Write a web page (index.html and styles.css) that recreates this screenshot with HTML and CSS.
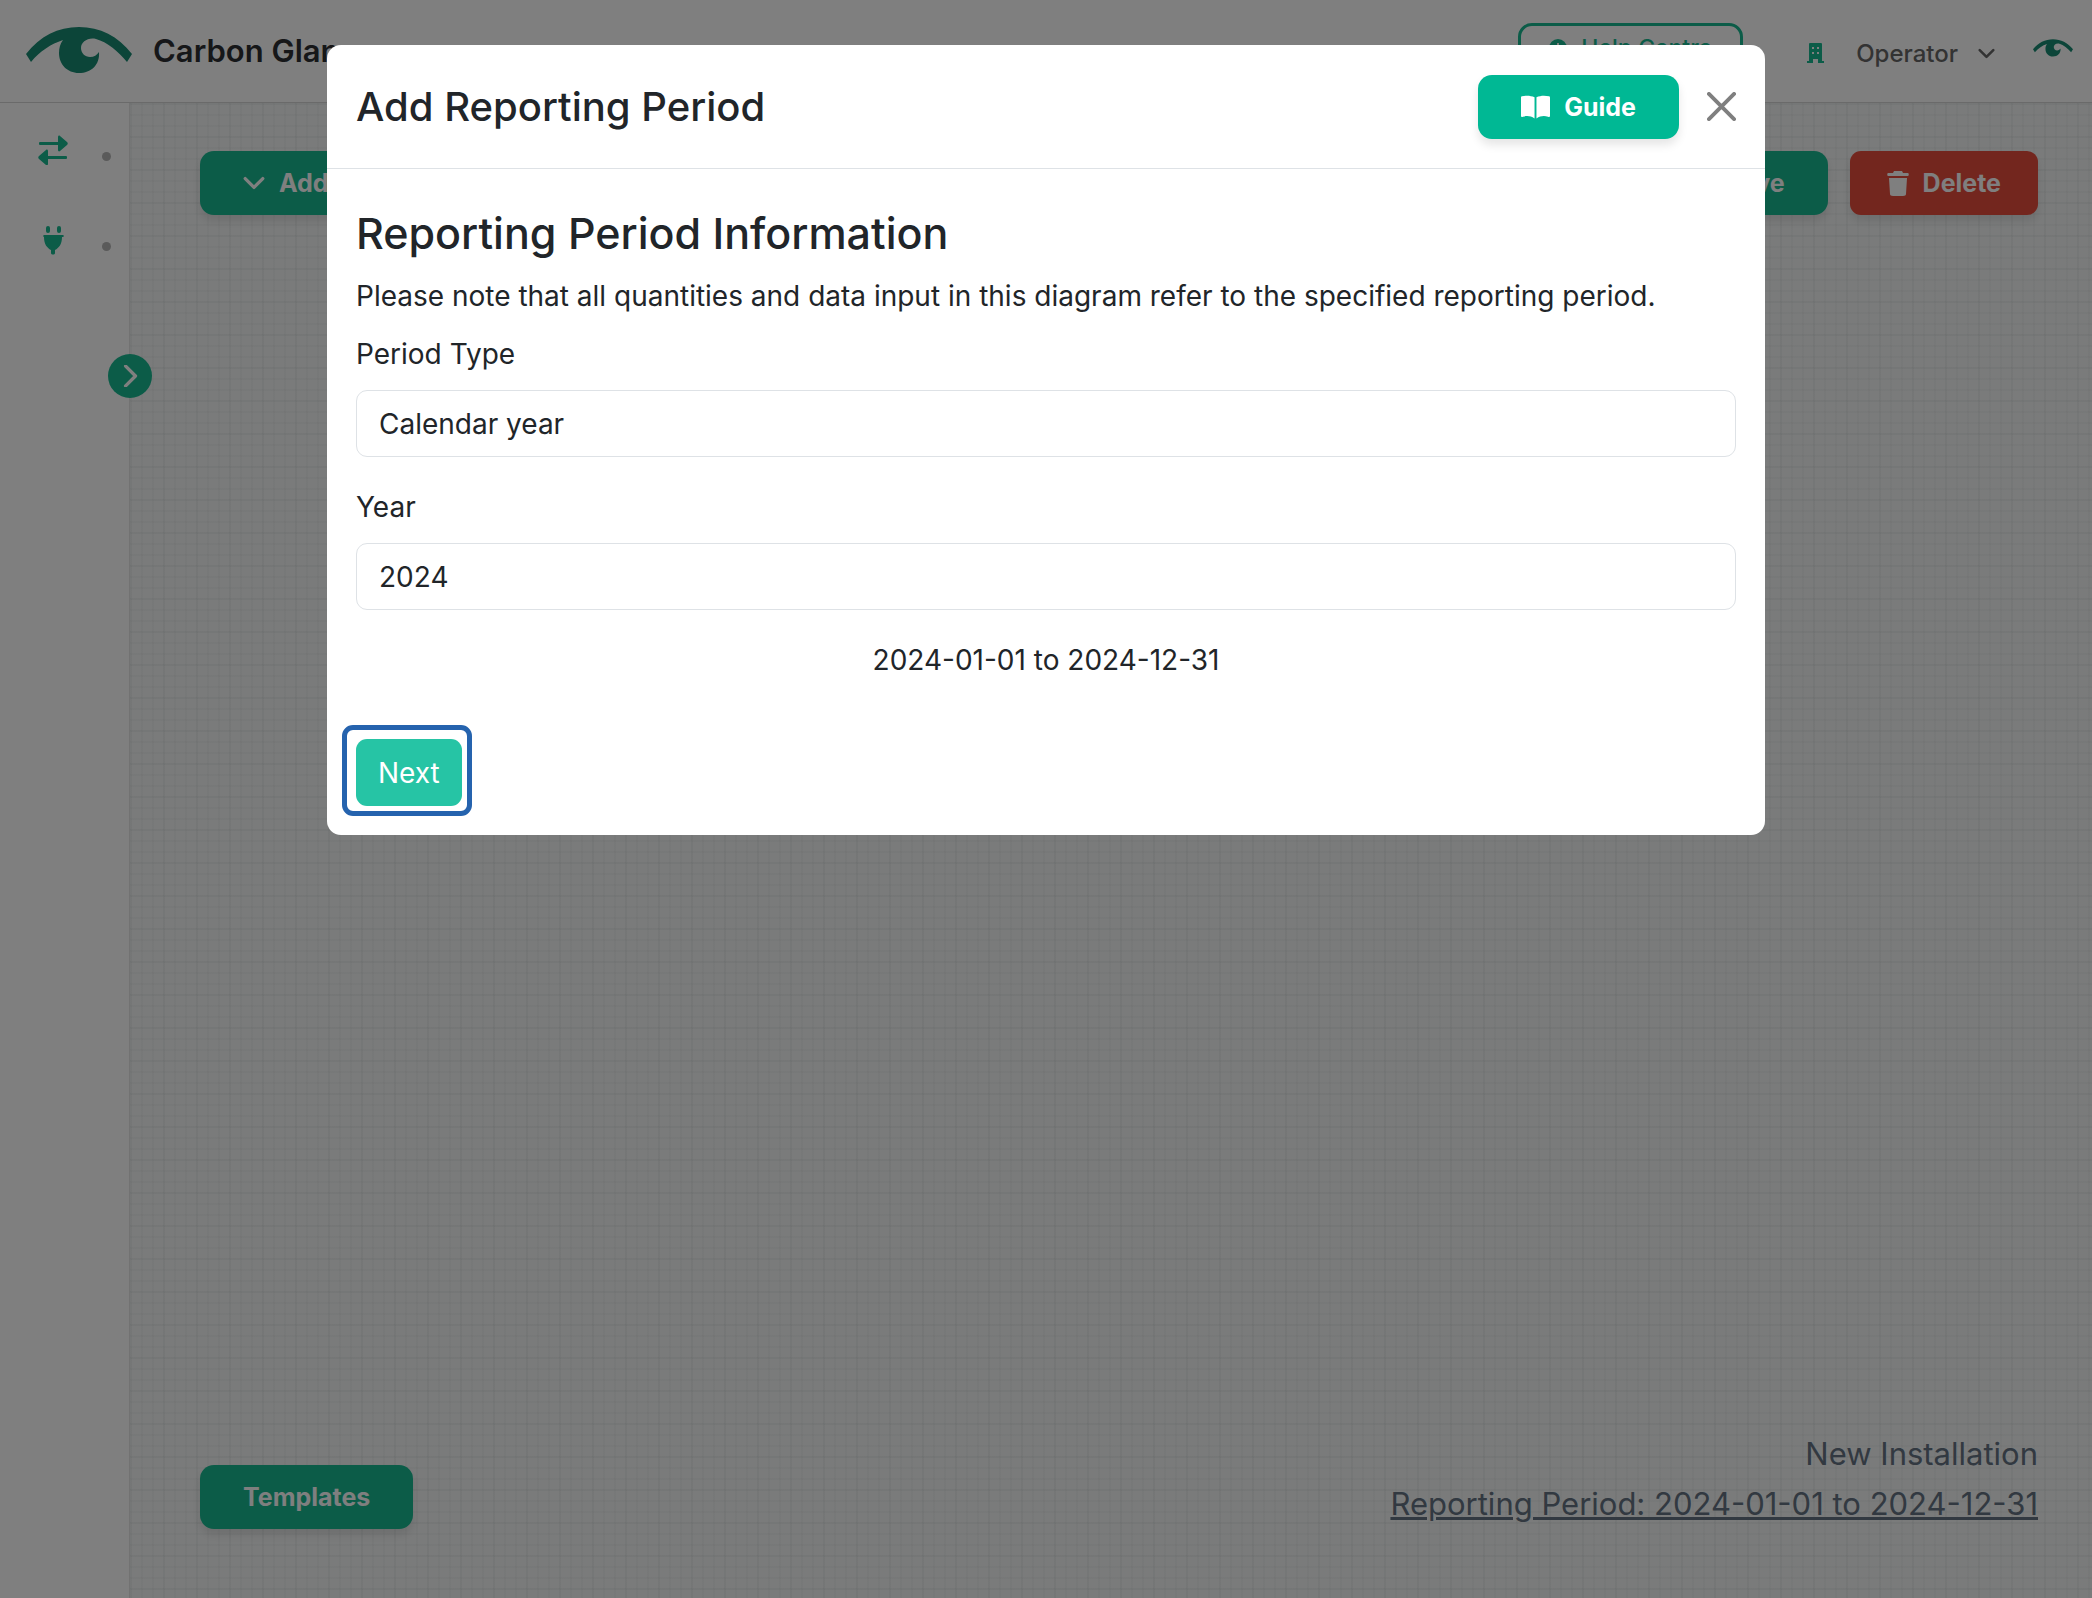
FILE: index.html
```html
<!DOCTYPE html>
<html lang="en">
<head>
  <meta charset="utf-8">
  <title>Carbon Glance</title>
  <link rel="stylesheet" href="styles.css">
</head>
<body>

  <!-- Shared icons -->
  <svg class="sprite" aria-hidden="true">
    <symbol id="eye" viewBox="0 0 106 47">
      <path d="M0 27C14 9 32 0 53 0s39 9 53 27l-5 8C92 24 81 15 70 12c-8-2-15 3-15 9 0 5 4 9 9 9 4 0 7-2 9-5 1 13-8 21-20 21S33 37 33 26c0-5 1-9 4-13C25 17 14 24 5 35z"/>
    </symbol>
    <symbol id="chevron" viewBox="0 0 20 20">
      <path d="M2 6l8 8 8-8" fill="none" stroke="currentColor" stroke-width="3" stroke-linecap="round" stroke-linejoin="round"/>
    </symbol>
  </svg>

  <div class="app">
    <header class="topbar">
      <a class="brand" href="#">
        <svg class="brand-logo"><use href="#eye"/></svg>
        <span>Carbon Glance</span>
      </a>
      <nav class="topbar-nav">
        <a class="help" href="#">
          <svg viewBox="0 0 18 18"><circle cx="9" cy="9" r="9" fill="currentColor"/><path d="M9 4v2M9 8v6" stroke="#fff" stroke-width="2"/></svg>
          Help Centre
        </a>
        <button class="account" type="button">
          <svg class="building" viewBox="0 0 17 20"><path fill="currentColor" fill-rule="evenodd" d="M3 0h11q1 0 1 1v17h2v2h-6v-4H6v4H0v-2h2V1q0-1 1-1zM5 4v2h2V4zm5 0v2h2V4zM5 9v2h2V9zm5 0v2h2V9z"/></svg>
          Operator
          <svg class="caret"><use href="#chevron"/></svg>
        </button>
        <svg class="avatar"><use href="#eye"/></svg>
      </nav>
    </header>

    <div class="workspace">
      <aside class="sidebar">
        <a class="side-link" href="#" aria-label="Flows">
          <svg viewBox="0 0 30 30"><g fill="currentColor"><rect x="1" y="7" width="24" height="3" rx="1"/><path d="M20 2c0-1 1-2 2-1l7 6c1 1 1 2 0 3l-7 6c-1 1-2 0-2-1z"/><rect x="5" y="21" width="24" height="3" rx="1"/><path d="M10 16c0-1-1-2-2-1l-7 6c-1 1-1 2 0 3l7 6c1 1 2 0 2-1z"/></g></svg>
          <span class="dot"></span>
        </a>
        <a class="side-link" href="#" aria-label="Connections">
          <svg viewBox="0 0 30 30"><g fill="currentColor"><rect x="8" y="1" width="4" height="7" rx="2"/><rect x="19" y="1" width="4" height="7" rx="2"/><path d="M6 10h19c1 0 1 2 0 2h-1c0 7-3 11-7 13v3c0 2-4 2-4 0v-3c-4-2-7-6-7-13H6c-1 0-1-2 0-2z"/></g></svg>
          <span class="dot"></span>
        </a>
        <button class="expand" type="button" aria-label="Expand sidebar">
          <svg viewBox="0 0 20 20"><path d="M6 1l9 9-9 9" fill="none" stroke="currentColor" stroke-width="3" stroke-linecap="round" stroke-linejoin="round"/></svg>
        </button>
      </aside>

      <main class="canvas">
        <div class="row">
          <button class="btn add" type="button"><svg><use href="#chevron"/></svg>Add</button>
          <div class="actions">
            <button class="btn" type="button">Save</button>
            <button class="btn danger" type="button">
              <svg class="trash" viewBox="0 0 22 25"><path fill="currentColor" d="M7 0h8l1 2h5c1 0 1 3 0 3H1C0 5 0 2 1 2h5zM2 7h18l-1 16c0 1-1 2-3 2H6c-2 0-3-1-3-2z"/></svg>
              Delete
            </button>
          </div>
        </div>
        <div class="row bottom">
          <button class="btn" type="button">Templates</button>
          <div class="summary">
            <div>New Installation</div>
            <a href="#">Reporting Period: 2024-01-01 to 2024-12-31</a>
          </div>
        </div>
      </main>
    </div>
  </div>

  <!-- Reporting period dialog -->
  <div class="backdrop">
    <div class="modal" role="dialog" aria-labelledby="modalTitle">
      <div class="modal-header">
        <h1 id="modalTitle">Add Reporting Period</h1>
        <button class="btn guide" type="button">
          <svg class="book" viewBox="0 0 30 24"><path fill="currentColor" d="M14 2C10 0 5 0 1 1 0 1 0 2 0 3v18c0 1 1 2 2 1 4-1 8-1 12 2zM16 2c4-2 9-2 13-1 1 0 1 1 1 2v18c0 1-1 2-2 1-4-1-8-1-12 2z"/></svg>
          Guide
        </button>
        <button class="close" type="button" aria-label="Close">
          <svg viewBox="0 0 30 30"><path d="M2 2l26 26M28 2L2 28" stroke="currentColor" stroke-width="4" stroke-linecap="round"/></svg>
        </button>
      </div>
      <form class="modal-body">
        <h2>Reporting Period Information</h2>
        <p>Please note that all quantities and data input in this diagram refer to the specified reporting period.</p>
        <label for="periodType">Period Type</label>
        <select id="periodType">
          <option>Calendar year</option>
        </select>
        <label for="year">Year</label>
        <select id="year">
          <option>2024</option>
        </select>
        <div class="range">2024-01-01 to 2024-12-31</div>
        <div class="highlight">
          <button class="next" type="button">Next</button>
        </div>
      </form>
    </div>
  </div>

</body>
</html>
```
FILE: styles.css
```css
* {
  box-sizing: border-box;
}
body {
  margin: 0;
  font-family: Inter, sans-serif;
  font-size: 28px;
  line-height: 43px;
  color: #212529;
}
button, select {
  font-family: inherit;
  font-size: inherit;
  border: none;
}
svg {
  flex: none;
}
.sprite {
  position: absolute;
  width: 0;
  height: 0;
}
.app {
  display: flex;
  flex-direction: column;
  min-height: 100vh;
}

/* top bar */
.topbar {
  display: flex;
  justify-content: space-between;
  height: 103px;
  padding: 0 19px 0 26px;
  border-bottom: 1px solid #d4d4d4;
  background: #fff;
}
.brand {
  display: flex;
  align-items: center;
  gap: 21px;
  height: 100px;
  font-size: 31px;
  font-weight: 600;
  color: #2c2f33;
  text-decoration: none;
}
.brand-logo {
  width: 106px;
  height: 47px;
  fill: #188a72;
}
.topbar-nav {
  display: flex;
  align-items: flex-start;
  padding-top: 23px;
}
.help {
  display: flex;
  align-items: center;
  gap: 14px;
  height: 50px;
  padding: 0 28px;
  border: 3px solid #18b890;
  border-radius: 14px;
  font-size: 23px;
  font-weight: 500;
  color: #18b890;
  text-decoration: none;
}
.help svg {
  width: 18px;
  height: 18px;
}
.account {
  display: flex;
  align-items: center;
  height: 60px;
  margin: 0 38px 0 64px;
  padding: 0;
  background: none;
  font-size: 24px;
  font-weight: 500;
  color: #666;
}
.building {
  width: 17px;
  height: 20px;
  margin-right: 32px;
  color: #18b890;
}
.caret {
  width: 17px;
  height: 17px;
  margin-left: 20px;
}
.avatar {
  width: 40px;
  height: 18px;
  margin-top: 16px;
  fill: #188a72;
}

/* side bar and canvas */
.workspace {
  display: flex;
  flex: 1;
}
.sidebar {
  position: relative;
  width: 130px;
  padding-top: 32px;
  border-right: 1px solid #e4e4e4;
  background: #fff;
}
.side-link {
  display: flex;
  align-items: center;
  justify-content: space-between;
  height: 30px;
  margin-bottom: 60px;
  padding: 0 18px 0 38px;
  color: #18b890;
}
.side-link svg {
  width: 30px;
  height: 30px;
}
.dot {
  width: 9px;
  height: 9px;
  margin-top: 12px;
  border-radius: 50%;
  background: #b4b4b4;
}
.expand {
  position: absolute;
  top: 251px;
  right: -23px;
  display: flex;
  align-items: center;
  justify-content: center;
  width: 44px;
  height: 44px;
  padding: 0;
  border-radius: 50%;
  background: #18b890;
  color: #fff;
}
.expand svg {
  width: 22px;
  height: 22px;
}
.canvas {
  display: flex;
  flex: 1;
  flex-direction: column;
  justify-content: space-between;
  padding: 48px 54px 69px 70px;
  background-color: #f5f7f7;
  background-image:
    linear-gradient(rgba(60, 80, 80, 0.03) 2px, transparent 2px),
    linear-gradient(90deg, rgba(60, 80, 80, 0.03) 2px, transparent 2px),
    linear-gradient(rgba(60, 80, 80, 0.02) 2px, transparent 2px),
    linear-gradient(90deg, rgba(60, 80, 80, 0.02) 2px, transparent 2px);
  background-size: 11px 11px, 11px 11px, 33px 33px, 33px 33px;
}
.row {
  display: flex;
  justify-content: space-between;
}
.actions {
  display: flex;
  gap: 22px;
}
.bottom {
  align-items: flex-end;
}
.btn {
  display: flex;
  align-items: center;
  justify-content: center;
  gap: 14px;
  height: 64px;
  padding: 0 43px;
  border-radius: 14px;
  background: #18b890;
  box-shadow: 0 6px 10px rgba(0, 0, 0, 0.1);
  color: #fff;
  font-size: 25px;
  font-weight: 700;
}
.add svg {
  width: 22px;
  height: 22px;
}
.danger {
  padding: 0 37px;
  border-radius: 11px;
  background: #e74c3c;
}
.trash {
  width: 22px;
  height: 25px;
}
.summary {
  font-size: 31px;
  line-height: 50px;
  text-align: right;
  color: #647282;
}
.summary a {
  color: inherit;
}

/* dialog */
.backdrop {
  position: fixed;
  inset: 0;
  padding: 45px 20px;
  background: rgba(0, 0, 0, 0.5);
}
.modal {
  max-width: 1438px;
  margin: 0 auto;
  border-radius: 14px;
  background: #fff;
}
.modal-header {
  display: flex;
  align-items: center;
  padding: 29px;
  border-bottom: 1px solid #dee2e6;
}
h1, h2 {
  margin: 0;
  font-weight: 500;
}
h1 {
  flex: 1;
  font-size: 40px;
  line-height: 65px;
}
h2 {
  margin-bottom: 14px;
  font-size: 43px;
  line-height: 55px;
}
.guide {
  background: #00b894;
}
.book {
  width: 29px;
  height: 24px;
}
.close {
  width: 29px;
  height: 29px;
  margin-left: 28px;
  padding: 0;
  background: none;
  color: #7f7f7f;
}
.close svg {
  display: block;
}
.modal-body {
  padding: 37px 29px 19px;
}
p {
  margin: 0 0 15px;
}
label {
  display: block;
  margin-bottom: 14px;
}
select {
  display: block;
  width: 100%;
  height: 67px;
  margin-bottom: 29px;
  padding: 0 22px;
  border: 1px solid #dee2e6;
  border-radius: 11px;
  background: #fff;
  color: #212529;
  appearance: none;
}
.range {
  margin-bottom: 43px;
  text-align: center;
}
.highlight {
  width: fit-content;
  margin-left: -14px;
  padding: 9px 5px 5px 9px;
  border: 5px solid #2563ae;
  border-radius: 11px;
}
.next {
  display: block;
  height: 67px;
  padding: 0 22px;
  border-radius: 11px;
  background: #26c4a5;
  color: #fff;
}
```
